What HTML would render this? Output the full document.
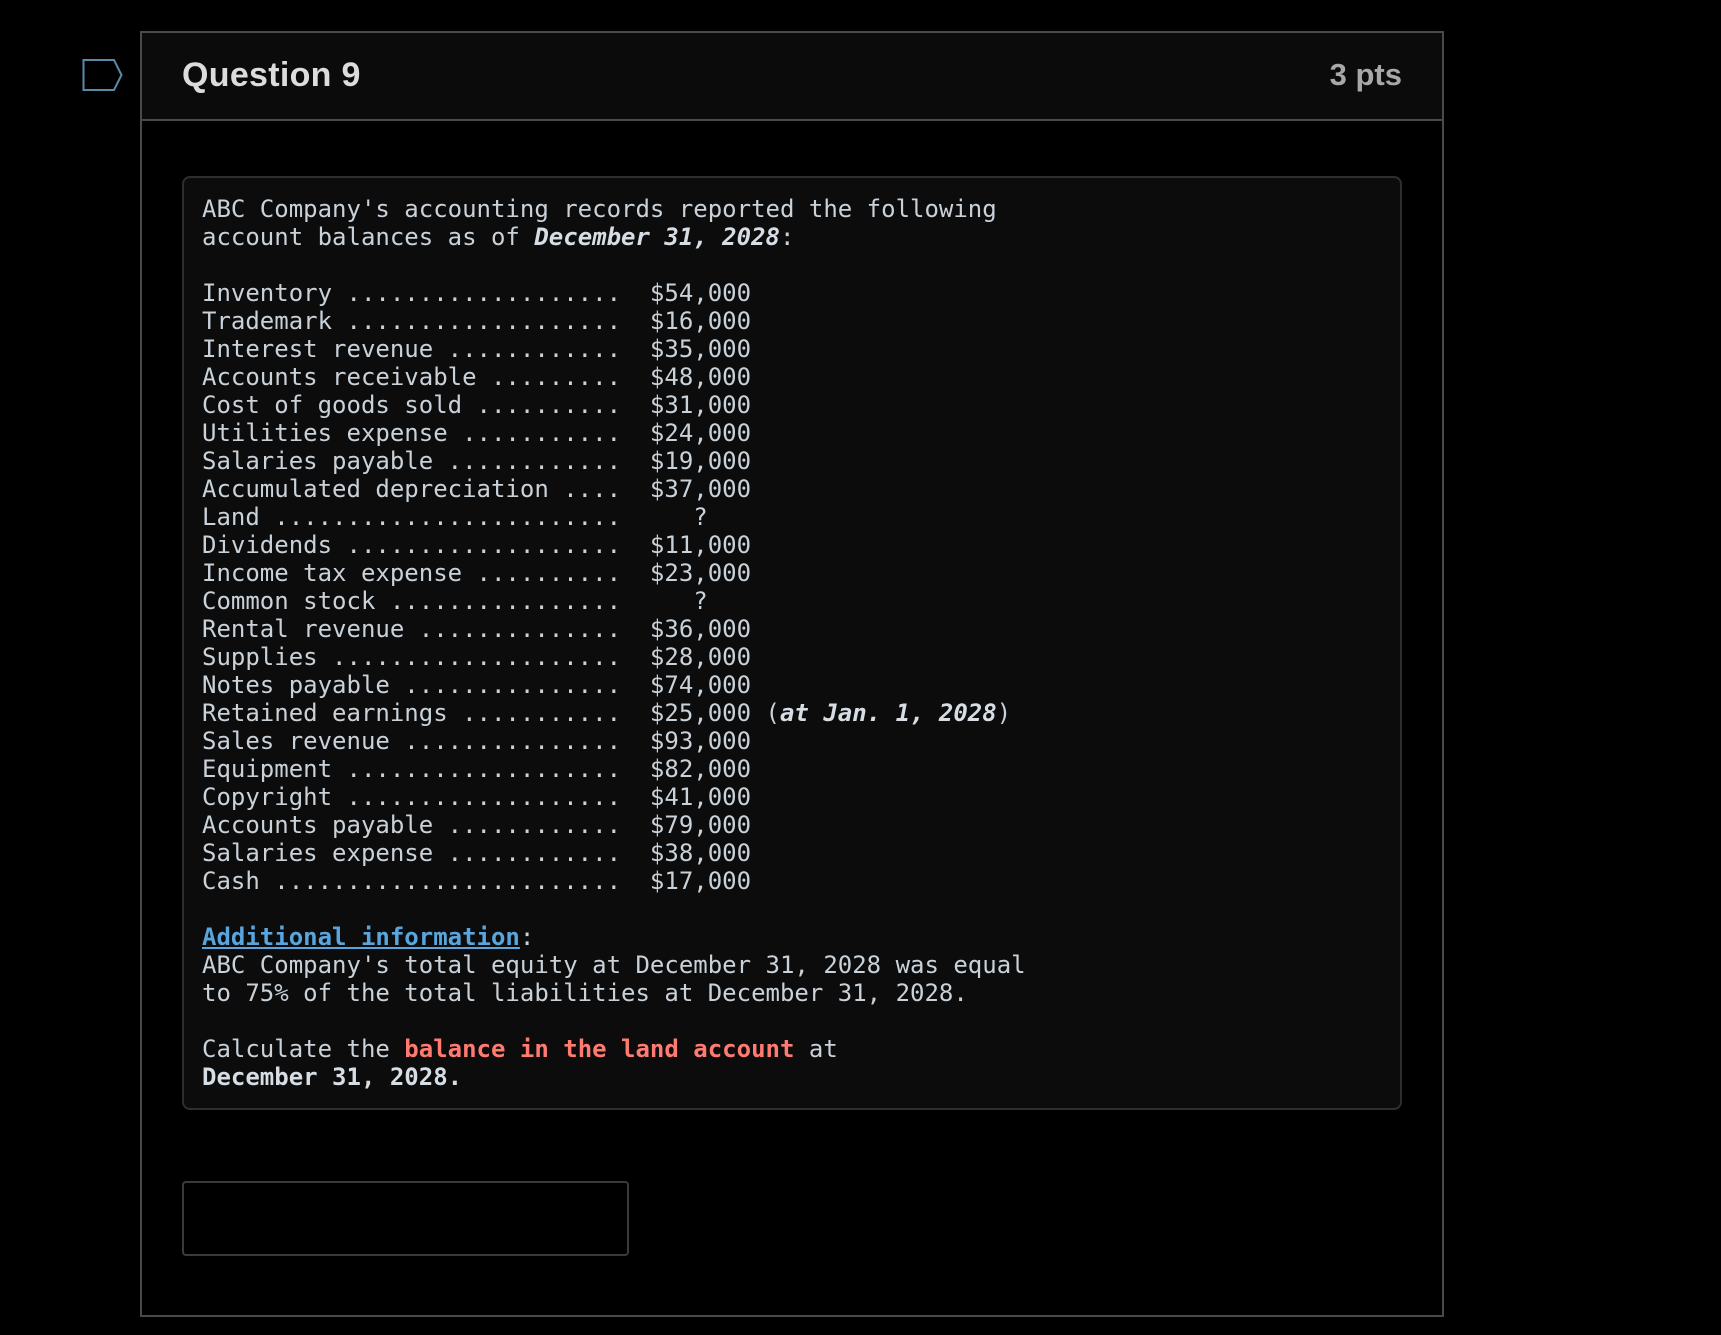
<!DOCTYPE html>
<html><head><meta charset="utf-8"><style>
html,body{margin:0;padding:0;background:#000;width:1721px;height:1335px;overflow:hidden}
.icon{position:absolute;left:82px;top:58px}
.card{position:absolute;left:140px;top:31px;width:1304px;height:1286px;border:2px solid #4a4a4a;box-sizing:border-box;background:#000}
.hdr{height:88px;background:#0b0b0b;border-bottom:2px solid #4a4a4a;box-sizing:border-box;position:relative;font-family:"Liberation Sans",sans-serif;font-weight:bold}
.hdr .t{position:absolute;left:40px;top:23px;font-size:34px;color:#dcdcdc;letter-spacing:0.3px}
.hdr .p{position:absolute;right:40px;top:24px;font-size:31px;color:#a8a8a8}
pre{position:absolute;left:40px;top:143px;width:1220px;height:934px;box-sizing:border-box;margin:0;background:#0c0c0c;border:2px solid #2e2e2e;border-radius:8px;padding:17px 0 0 18px;font-family:"DejaVu Sans Mono","Liberation Mono",monospace;font-size:24px;line-height:28px;color:#c9d1d9}
b{color:#d6dde4}
.r{color:#ff7b72;font-weight:bold}
a{color:#58a6dd;font-weight:bold;text-decoration:underline}
.inp{position:absolute;left:40px;top:1148px;width:447px;height:75px;box-sizing:border-box;border:2px solid #3a3a3a;border-radius:4px;background:#000}
</style></head><body>
<svg class="icon" width="42" height="34" viewBox="0 0 42 34"><path d="M1.5 2H32L39.5 17L32 32H1.5Z" fill="none" stroke="#5a8aa8" stroke-width="2"/></svg>
<div class="card">
<div class="hdr"><span class="t">Question 9</span><span class="p">3 pts</span></div>
<pre>ABC Company's accounting records reported the following
account balances as of <b><i>December 31, 2028</i></b>:

Inventory ...................  $54,000
Trademark ...................  $16,000
Interest revenue ............  $35,000
Accounts receivable .........  $48,000
Cost of goods sold ..........  $31,000
Utilities expense ...........  $24,000
Salaries payable ............  $19,000
Accumulated depreciation ....  $37,000
Land ........................     ?
Dividends ...................  $11,000
Income tax expense ..........  $23,000
Common stock ................     ?
Rental revenue ..............  $36,000
Supplies ....................  $28,000
Notes payable ...............  $74,000
Retained earnings ...........  $25,000 (<b><i>at Jan. 1, 2028</i></b>)
Sales revenue ...............  $93,000
Equipment ...................  $82,000
Copyright ...................  $41,000
Accounts payable ............  $79,000
Salaries expense ............  $38,000
Cash ........................  $17,000

<a>Additional information</a>:
ABC Company's total equity at December 31, 2028 was equal
to 75% of the total liabilities at December 31, 2028.

Calculate the <span class="r">balance in the land account</span> at
<b>December 31, 2028.</b></pre>
<div class="inp"></div>
</div>
</body></html>
